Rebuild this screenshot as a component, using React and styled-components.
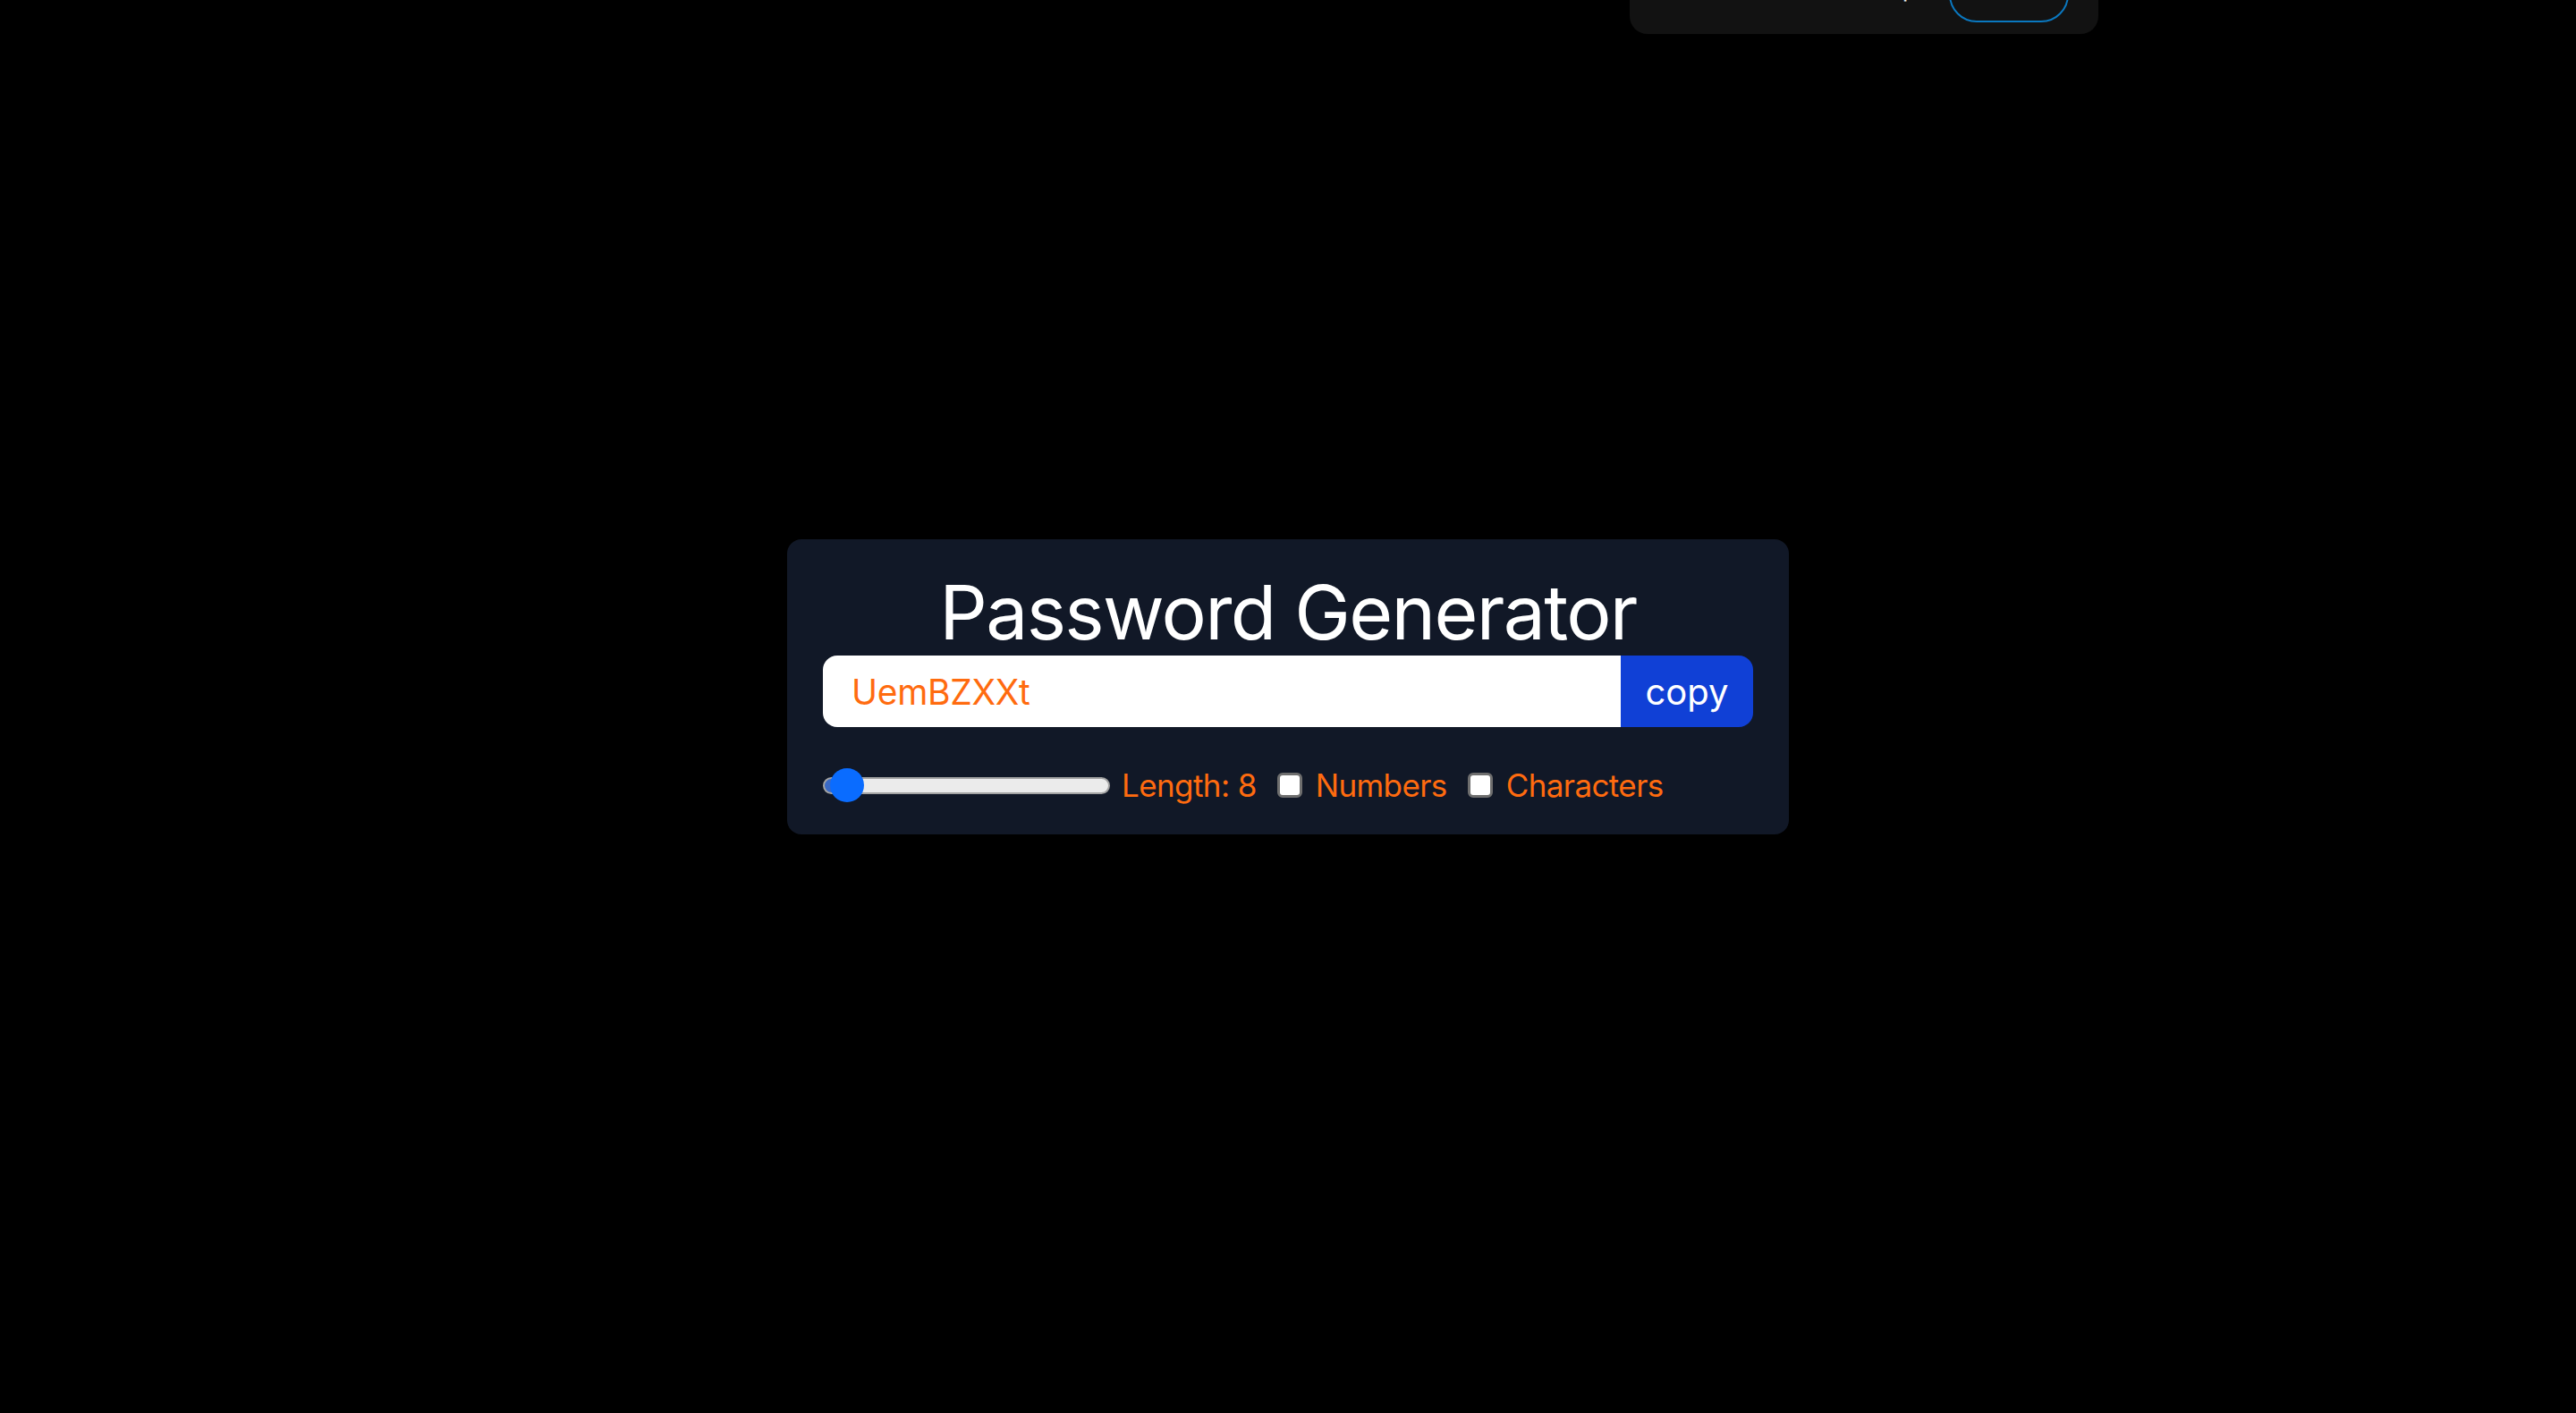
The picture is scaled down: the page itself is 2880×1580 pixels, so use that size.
import { useState } from "react";
import styled, { createGlobalStyle } from "styled-components";

const GlobalStyle = createGlobalStyle`
  html, body {
    margin: 0;
    padding: 0;
    background: #000;
    font-family: "Inter", "Liberation Sans", sans-serif;
  }
`;

const Page = styled.div`
  min-height: 100vh;
  padding-top: 603px;
  box-sizing: border-box;
`;

const Banner = styled.div`
  position: fixed;
  top: -62px;
  left: 1822px;
  width: 524px;
  height: 100px;
  box-sizing: border-box;
  background: #121212;
  border-radius: 20px;
  display: flex;
  justify-content: flex-end;
  align-items: flex-end;
  gap: 35px;
  padding: 0 33px 13px;
`;

const BannerText = styled.span`
  color: #e8e8e8;
  font-size: 28px;
  line-height: 32px;
  margin-bottom: 23px;
`;

const PillButton = styled.button`
  width: 134px;
  height: 62px;
  border: 2px solid #0a78c0;
  border-radius: 31px;
  background: transparent;
  color: #9aa4ad;
  font-family: inherit;
  font-size: 26px;
  display: flex;
  justify-content: center;
  align-items: flex-start;
  padding-top: 0;
`;

const Card = styled.div`
  width: 1120px;
  margin: 0 auto;
  box-sizing: border-box;
  background: #111827;
  border-radius: 16px;
  padding: 42px 40px 35px;
`;

const Title = styled.h1`
  margin: 0 0 9px;
  color: #fff;
  font-weight: 400;
  font-size: 84px;
  letter-spacing: -1.7px;
  line-height: 79px;
  text-align: center;
`;

const InputRow = styled.div`
  display: flex;
  height: 80px;
  border-radius: 16px;
  overflow: hidden;
`;

const PasswordInput = styled.input`
  flex: 1;
  min-width: 0;
  border: none;
  outline: none;
  background: #fff;
  color: #ff6b0f;
  font-family: inherit;
  font-size: 39px;
  letter-spacing: -0.3px;
  padding: 0 32px;
`;

const CopyButton = styled.button`
  width: 148px;
  border: none;
  background: #1040d6;
  color: #fff;
  font-family: inherit;
  font-size: 40px;
  padding: 0;
  cursor: pointer;
`;

const Options = styled.div`
  display: flex;
  align-items: center;
  gap: 23px;
  margin-top: 45px;
  height: 40px;
`;

const Option = styled.div`
  display: flex;
  align-items: center;
  gap: ${(p) => p.$gap || 15}px;
`;

const Range = styled.input`
  -webkit-appearance: none;
  appearance: none;
  width: 321px;
  height: 40px;
  margin: 0;
  background: transparent;
  cursor: pointer;

  &::-webkit-slider-runnable-track {
    height: 19px;
    box-sizing: border-box;
    border: 2px solid #a3a3a3;
    border-radius: 10px;
    background: linear-gradient(to right, #3a69c4 0 14px, #ebebeb 14px);
  }

  &::-webkit-slider-thumb {
    -webkit-appearance: none;
    width: 38px;
    height: 38px;
    border-radius: 50%;
    background: #0a6cff;
    border: none;
    margin-top: -11.5px;
  }
`;

const Check = styled.input`
  -webkit-appearance: none;
  appearance: none;
  width: 28px;
  height: 28px;
  margin: 0;
  box-sizing: border-box;
  background: #fff;
  border: 3px solid #6e6e6e;
  border-radius: 6px;
`;

const Label = styled.label`
  color: #ff6b0f;
  font-size: 35px;
  letter-spacing: -0.6px;
  line-height: 40px;
`;

export default function App() {
  const [length, setLength] = useState(8);
  const [numbers, setNumbers] = useState(false);
  const [chars, setChars] = useState(false);

  return (
    <Page>
      <GlobalStyle />
      <Banner>
        <BannerText>Get the desktop</BannerText>
        <PillButton>Open</PillButton>
      </Banner>
      <Card>
        <Title>Password Generator</Title>
        <InputRow>
          <PasswordInput type="text" value="UemBZXXt" readOnly placeholder="password" />
          <CopyButton>copy</CopyButton>
        </InputRow>
        <Options>
          <Option $gap={13}>
            <Range
              type="range"
              min={6}
              max={100}
              value={length}
              onChange={(e) => setLength(Number(e.target.value))}
            />
            <Label>Length: {length}</Label>
          </Option>
          <Option>
            <Check type="checkbox" checked={numbers} onChange={() => setNumbers(!numbers)} id="numberInput" />
            <Label htmlFor="numberInput">Numbers</Label>
          </Option>
          <Option>
            <Check type="checkbox" checked={chars} onChange={() => setChars(!chars)} id="characterInput" />
            <Label htmlFor="characterInput">Characters</Label>
          </Option>
        </Options>
      </Card>
    </Page>
  );
}
